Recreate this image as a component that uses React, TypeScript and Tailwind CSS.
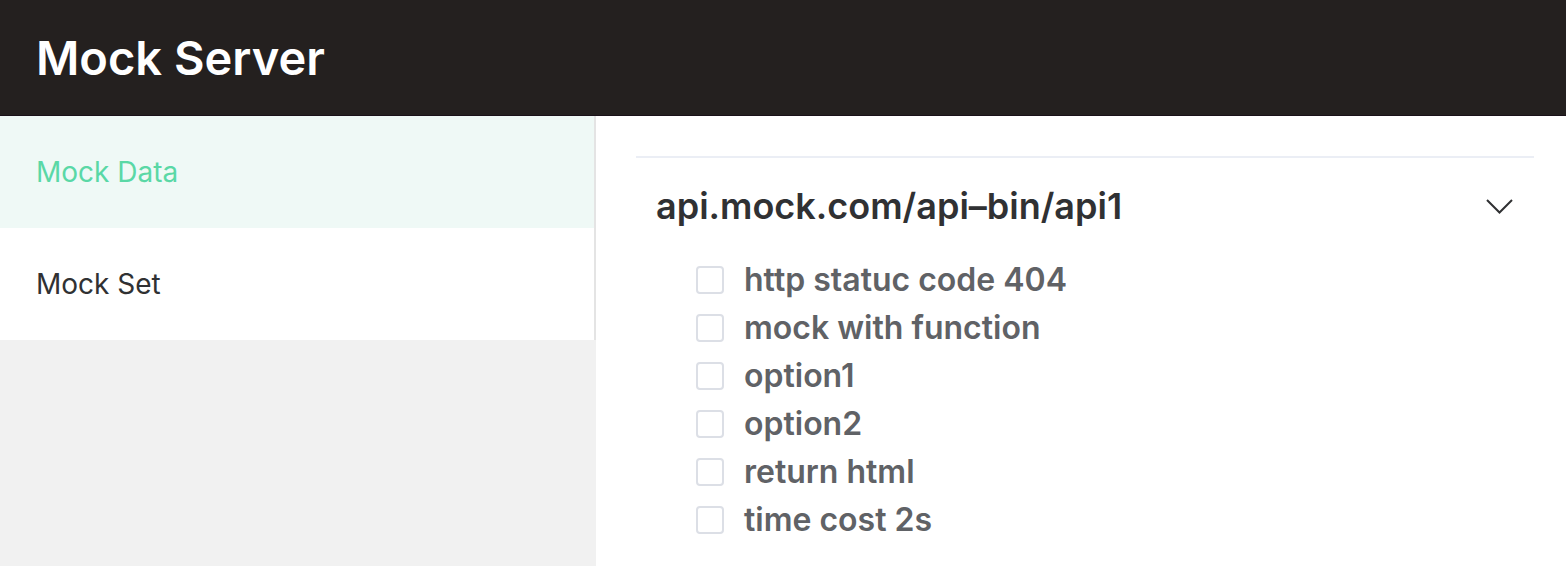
const options = [
  'http statuc code 404',
  'mock with function',
  'option1',
  'option2',
  'return html',
  'time cost 2s',
];

function Header() {
  return (
    <header className="flex h-[116px] items-center border-b border-[#1a1119] bg-[#24201f] px-9">
      <h1 className="text-[47px] leading-[56px] font-semibold text-white">Mock Server</h1>
    </header>
  );
}

function Sidebar() {
  return (
    <aside className="w-2/5 max-w-[596px] shrink-0 bg-[#f1f1f1]">
      <nav className="flex flex-col border-r-2 border-[#e4e4e4] bg-white text-[28px]">
        <a href="#data" className="flex h-28 items-center bg-[#eff9f6] px-9 text-[#5ad8a6]">Mock Data</a>
        <a href="#set" className="flex h-28 items-center px-9 text-[#303133]">Mock Set</a>
      </nav>
    </aside>
  );
}

function ApiPanel() {
  return (
    <section className="border-t-2 border-[#ebeef5] px-5 pt-5">
      <h2>
        <button type="button" aria-expanded="true" className="flex h-14 w-full items-center justify-between text-[36px] font-semibold text-[#303133]">
          api.mock.com/api–bin/api1
          <svg aria-hidden="true" className="h-7 w-7" viewBox="0 0 28 28" fill="none" stroke="#303133" strokeWidth="2">
            <path d="M1 8 13.5 20.5 26 8" />
          </svg>
        </button>
      </h2>
      <ul className="px-10 pt-[22px]">
        {options.map((option) => (
          <li key={option}>
            <label className="flex h-12 items-center gap-5 text-[32px] font-semibold text-[#606266]">
              <input type="checkbox" className="h-7 w-7 shrink-0 appearance-none rounded-sm border-2 border-[#dcdfe6] bg-white checked:border-[#5ad8a6] checked:bg-[#5ad8a6]" />
              {option}
            </label>
          </li>
        ))}
      </ul>
    </section>
  );
}

export default function App() {
  return (
    <div className="flex min-h-screen flex-col bg-white font-['Inter',sans-serif]">
      <Header />
      <div className="flex flex-1">
        <Sidebar />
        <main className="min-w-0 flex-1 pt-10 pr-8 pl-10">
          <ApiPanel />
        </main>
      </div>
    </div>
  );
}
